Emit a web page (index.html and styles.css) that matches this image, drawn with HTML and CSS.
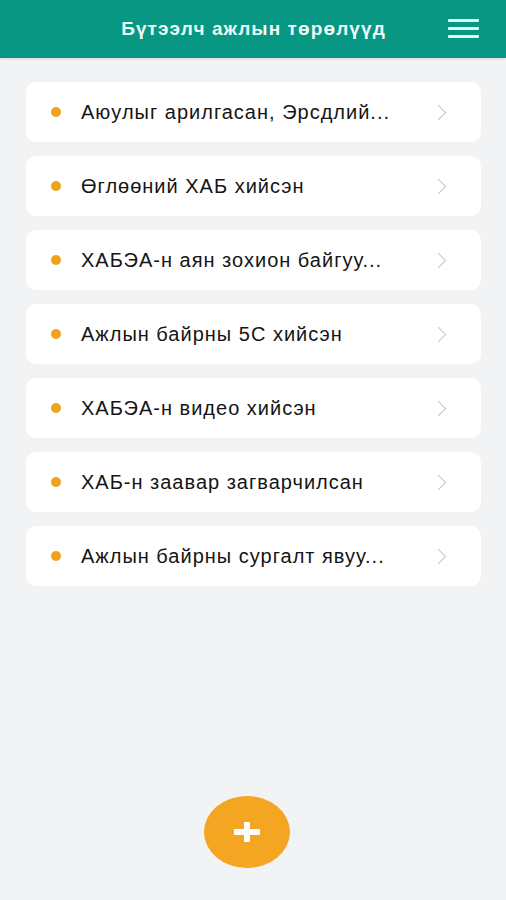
FILE: index.html
```html
<!DOCTYPE html>
<html lang="mn">
<head>
  <meta charset="UTF-8" />
  <title>Бүтээлч ажлын төрөлүүд</title>
  <meta name="viewport" content="width=device-width, initial-scale=1" />
  <link rel="stylesheet" href="styles.css">
</head>
<body>
  <header class="topbar">
    <h1>Бүтээлч ажлын төрөлүүд</h1>
    <button class="menu-btn" aria-label="Цэс">
      <span></span><span></span><span></span>
    </button>
  </header>

  <ul class="list">
    <li class="item"><span class="dot"></span><span class="label">Аюулыг арилгасан, Эрсдлий...</span><span class="chev"></span></li>
    <li class="item"><span class="dot"></span><span class="label">Өглөөний ХАБ хийсэн</span><span class="chev"></span></li>
    <li class="item"><span class="dot"></span><span class="label">ХАБЭА-н аян зохион байгуу...</span><span class="chev"></span></li>
    <li class="item"><span class="dot"></span><span class="label">Ажлын байрны 5С хийсэн</span><span class="chev"></span></li>
    <li class="item"><span class="dot"></span><span class="label">ХАБЭА-н видео хийсэн</span><span class="chev"></span></li>
    <li class="item"><span class="dot"></span><span class="label">ХАБ-н заавар загварчилсан</span><span class="chev"></span></li>
    <li class="item"><span class="dot"></span><span class="label">Ажлын байрны сургалт явуу...</span><span class="chev"></span></li>
  </ul>

  <button class="fab" aria-label="Нэмэх"><span class="plus"></span></button>
</body>
</html>
```

FILE: styles.css
```css
body {
  margin: 0;
  padding: 0;
  background: #f2f3f5;
  font-family: "Liberation Sans", Arial, sans-serif;
  height: 900px;
  display: flex;
  flex-direction: column;
}
.topbar {
  background: #079782;
  height: 58px;
  display: flex;
  align-items: center;
  justify-content: center;
  position: relative;
  box-shadow: 0 1px 2px rgba(0,0,0,0.12);
}
.topbar h1 {
  margin: 0;
  color: #eefaf7;
  font-size: 19px;
  font-weight: 700;
  letter-spacing: 1.1px;
  padding-left: 1px;
}
.menu-btn {
  position: absolute;
  right: 27px;
  top: 19px;
  width: 31px;
  height: 19px;
  padding: 0;
  border: none;
  background: none;
  display: flex;
  flex-direction: column;
  justify-content: space-between;
}
.menu-btn span {
  display: block;
  height: 3px;
  background: #dff7f3;
  border-radius: 1px;
}
.list {
  list-style: none;
  margin: 0;
  padding: 24px 25px 0 26px;
  display: flex;
  flex-direction: column;
  gap: 14px;
}
.item {
  background: white;
  border-radius: 10px;
  height: 60px;
  display: flex;
  align-items: center;
  padding: 0 0 0 25px;
}
.dot {
  width: 10px;
  height: 10px;
  border-radius: 50%;
  background: #f0a21d;
  flex-shrink: 0;
}
.label {
  flex: 1;
  margin-left: 20px;
  font-size: 20px;
  letter-spacing: 1px;
  color: #151515;
}
.chev {
  width: 10px;
  height: 10px;
  border-right: 1.5px solid #c4c4c4;
  border-top: 1.5px solid #c4c4c4;
  transform: rotate(45deg);
  margin-right: 37px;
}
.fab {
  margin: auto auto 32px;
  width: 86px;
  height: 72px;
  border-radius: 50%;
  border: none;
  background: #f4a623;
  padding: 0;
  position: relative;
  left: -6px;
  display: flex;
  align-items: center;
  justify-content: center;
}
.plus {
  position: relative;
  width: 26px;
  height: 20px;
}
.plus::before,
.plus::after {
  content: "";
  position: absolute;
  background: white;
  border-radius: 1px;
}
.plus::before {
  left: 0;
  right: 0;
  top: 7px;
  height: 6px;
}
.plus::after {
  top: 0;
  bottom: 0;
  left: 10px;
  width: 6px;
}
```
